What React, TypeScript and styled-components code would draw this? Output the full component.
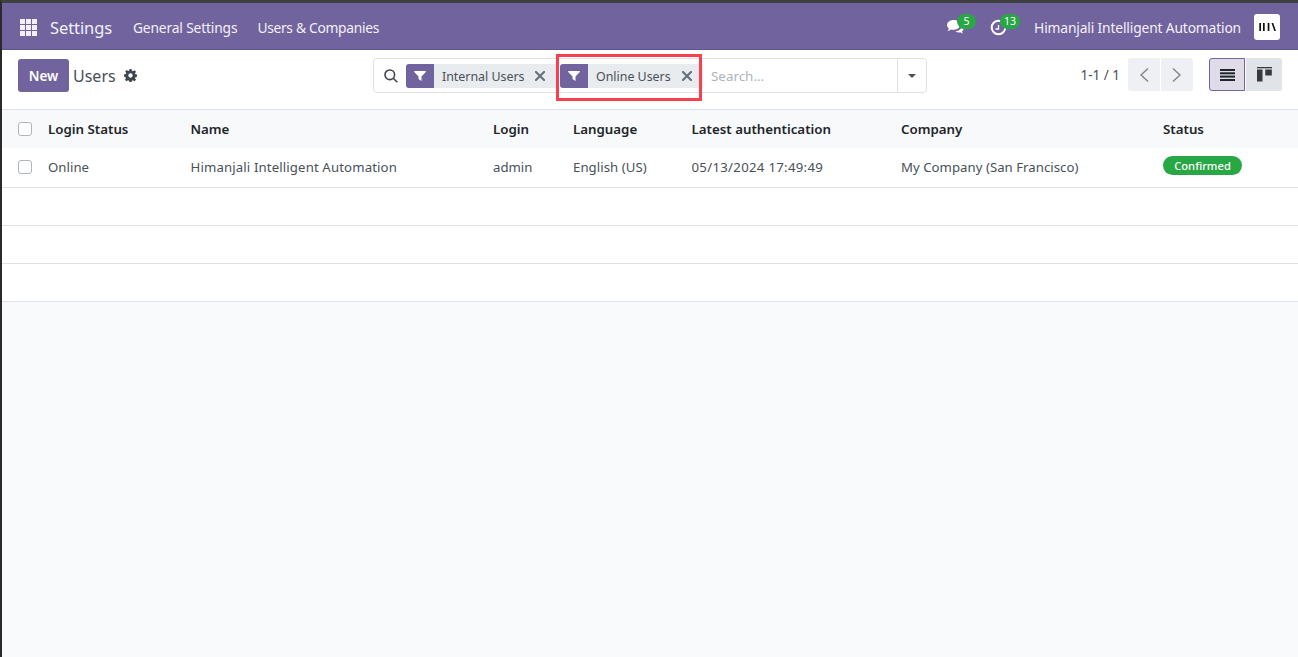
import React from "react";
import styled, { createGlobalStyle } from "styled-components";

const Global = createGlobalStyle`
  html, body { margin: 0; padding: 0; height: 100%; }
  body { font-family: "Noto Sans", "Open Sans", sans-serif; font-size: 13.5px; color: #495057; background: #f9fafb; }
  #root { height: 100%; }
  * { box-sizing: border-box; }
`;

const Page = styled.div`
  position: relative;
  height: 657px;
  overflow: hidden;
  display: flex;
  flex-direction: column;
  border-top: 3px solid #3f3f3f;
  border-left: 2px solid #2a2a2a;
  background: #f9fafb;
`;

const Navbar = styled.header`
  flex: 0 0 47px;
  display: flex;
  align-items: center;
  background: #71639e;
  border-bottom: 1px solid #5f5390;
  color: #f3f1f7;
  padding: 2px 18px 0 18px;
`;

const AppGrid = styled.svg`
  width: 17px;
  height: 17px;
  margin-right: 13px;
`;

const Brand = styled.span`
  font-size: 16.5px;
  margin-right: 21px;
  letter-spacing: -0.1px;
`;

const NavLink = styled.span<{ $ls: number }>`
  font-size: 13.8px;
  margin-right: 20px;
  letter-spacing: ${(p) => p.$ls}px;
`;

const Spacer = styled.div`
  flex: 1;
`;

const IconBadgeWrap = styled.div<{ $w: number }>`
  position: relative;
  width: ${(p) => p.$w}px;
  height: 20px;
  display: flex;
  align-items: center;
  color: #fff;
`;

const Badge = styled.span<{ $l: number; $w: number }>`
  position: absolute;
  left: ${(p) => p.$l}px;
  top: -3px;
  width: ${(p) => p.$w}px;
  height: 15px;
  border-radius: 8px;
  background: #28a745;
  color: #fff;
  font-size: 10.5px;
  line-height: 15px;
  text-align: center;
`;

const UserName = styled.span`
  font-size: 13.8px;
  letter-spacing: -0.15px;
  margin-right: 13px;
`;

const Avatar = styled.div`
  width: 26px;
  height: 26px;
  border-radius: 3px;
  background: #fff;
  display: flex;
  align-items: center;
  justify-content: center;
`;

const Control = styled.div`
  flex: 0 0 60px;
  display: grid;
  grid-template-columns: 371px 554px 1fr;
  align-items: start;
  background: #fff;
  border-bottom: 1px solid #dee2e6;
  padding-top: 8px;
`;

const Left = styled.div`
  display: flex;
  align-items: center;
  padding-left: 16px;
  height: 33px;
  margin-top: 1px;
`;

const NewButton = styled.button`
  width: 51px;
  height: 33px;
  border: 0;
  border-radius: 3px;
  background: #71639e;
  color: #fff;
  font: 600 13.5px "Noto Sans", sans-serif;
  padding: 0;
`;

const Title = styled.span`
  font-size: 16px;
  color: #495057;
  margin: 0 8px 0 4px;
`;

const SearchBox = styled.div`
  height: 35px;
  border: 1px solid #dee2e6;
  border-radius: 4px;
  background: #fff;
  display: flex;
  align-items: center;
  padding-left: 10px;
  overflow: hidden;
`;

const SearchGlyph = styled.svg`
  width: 14px;
  height: 14px;
  margin-right: 8px;
  flex: none;
`;

const Facet = styled.div<{ $w: number; $mr: number }>`
  width: ${(p) => p.$w}px;
  margin-right: ${(p) => p.$mr}px;
  height: 24px;
  background: #e9ecef;
  display: flex;
  align-items: center;
  border-radius: 3px 0 0 3px;
  flex: none;
`;

const FacetIcon = styled.div`
  width: 28px;
  height: 24px;
  background: #71639e;
  border-radius: 3px 0 0 3px;
  display: flex;
  align-items: center;
  justify-content: center;
  color: #fff;
  margin-right: 8px;
`;

const FacetLabel = styled.span`
  font-size: 12.4px;
  color: #495057;
  flex: 1;
  white-space: nowrap;
  padding-top: 2px;
`;

const FacetClose = styled.svg`
  width: 10px;
  height: 10px;
  margin-right: 11px;
  flex: none;
`;

const Placeholder = styled.span`
  font-size: 13.4px;
  color: #adb5bd;
  flex: 1;
`;

const Caret = styled.div`
  width: 29px;
  height: 33px;
  border-left: 1px solid #dee2e6;
  display: flex;
  align-items: center;
  justify-content: center;
  &::after {
    content: "";
    border-top: 4.5px solid #495057;
    border-left: 4.5px solid transparent;
    border-right: 4.5px solid transparent;
  }
`;

const Right = styled.div`
  display: flex;
  align-items: center;
  justify-content: flex-end;
  padding-right: 16px;
  height: 33px;
`;

const PagerText = styled.span`
  font-size: 13.5px;
  color: #495057;
  margin-right: 8px;
`;

const PagerButton = styled.div`
  width: 32px;
  height: 33px;
  background: #eef0f3;
  display: flex;
  align-items: center;
  justify-content: center;
  color: #7b8188;
  &:first-of-type { border-radius: 3px 0 0 3px; }
  & + & { margin-left: 1px; border-radius: 0 3px 3px 0; }
`;

const Pager = styled.div`
  display: flex;
  margin-right: 16px;
`;

const Views = styled.div`
  display: flex;
  gap: 1px;
`;

const ViewButton = styled.div<{ $active?: boolean }>`
  width: 36px;
  height: 33px;
  display: flex;
  align-items: center;
  justify-content: center;
  background: ${(p) => (p.$active ? "#dfdbe9" : "#e0e3e7")};
  border: ${(p) => (p.$active ? "1px solid #71639e" : "0")};
  border-radius: ${(p) => (p.$active ? "3px 0 0 3px" : "0 3px 3px 0")};
`;

const Row = styled.div<{ $head?: boolean; $h: number }>`
  flex: none;
  display: grid;
  grid-template-columns: 46px 142.5px 302.5px 80px 118.5px 209.5px 262px 1fr;
  align-items: center;
  height: ${(p) => p.$h}px;
  padding-bottom: ${(p) => (p.$head ? 0 : 2)}px;
  background: ${(p) => (p.$head ? "#f8f9fa" : "#fff")};
  border-bottom: ${(p) => (p.$head ? "0" : "1px solid #dee2e6")};
  font-weight: ${(p) => (p.$head ? 600 : 400)};
  color: ${(p) => (p.$head ? "#212529" : "#495057")};
  font-size: ${(p) => (p.$head ? 13.3 : 13.2)}px;
`;

const EmptyRow = styled.div`
  flex: none;
  height: 38px;
  background: #fff;
  border-bottom: 1px solid #dee2e6;
`;

const Check = styled.span`
  display: block;
  width: 14px;
  height: 14px;
  margin-left: 16px;
  border: 1px solid #adb5bd;
  border-radius: 3px;
  background: #fff;
`;

const Cell = styled.span<{ $ls?: number }>`
  white-space: nowrap;
  letter-spacing: ${(p) => p.$ls ?? 0}px;
`;

const Pill = styled.span`
  display: block;
  width: 79px;
  height: 19px;
  margin-bottom: 2px;
  border-radius: 10px;
  background: #28a745;
  color: #fff;
  font-size: 11.2px;
  font-weight: 500;
  line-height: 19px;
  text-align: center;
`;

const Highlight = styled.div`
  position: absolute;
  left: 554px;
  top: 51px;
  width: 146px;
  height: 47px;
  border: 3px solid #f8404f;
  pointer-events: none;
`;

const Filter = () => (
  <svg width="12" height="12" viewBox="0 0 12 12" fill="currentColor">
    <path d="M.6 1h10.800c.5 0 .7.5.4.9L7.500 6.400V11L4.500 9V6.400L.2 1.900C-.1 1.500.1 1 .6 1z" />
  </svg>
);

const Close = () => (
  <FacetClose viewBox="0 0 10 10">
    <path d="M1 1l8 8M9 1l-8 8" stroke="#667079" strokeWidth="2.100" strokeLinecap="square" fill="none" />
  </FacetClose>
);

const Chevron = ({ dir }: { dir: "l" | "r" }) => (
  <svg width="10" height="16" viewBox="0 0 10 16" fill="none" stroke="currentColor" strokeWidth="1.300">
    <path d={dir === "l" ? "M9 1.500L2 8l7 6.500" : "M1 1.500L8 8l-7 6.500"} />
  </svg>
);

const head = ["Login Status", "Name", "Login", "Language", "Latest authentication", "Company", "Status"];

export default function App() {
  return (
    <Page>
      <Global />
      <Navbar>
        <AppGrid viewBox="0 0 17 17" fill="#f3f1f7">
          {[0, 6, 12].flatMap((y) =>
            [0, 6, 12].map((x) => <rect key={`${x}-${y}`} x={x} y={y} width="5" height="5" />)
          )}
        </AppGrid>
        <Brand>Settings</Brand>
        <NavLink $ls={-0.16}>General Settings</NavLink>
        <NavLink $ls={-0.3}>Users &amp; Companies</NavLink>
        <Spacer />
        <IconBadgeWrap $w={44}>
          <svg width="19" height="16" viewBox="0 0 19 17" fill="#fff">
            <path d="M7.500 1C3.600 1 .5 3.400.5 6.400c0 1.500.8 2.800 2 3.800-.3 1-.9 1.800-1.700 2.500 1.500-.1 2.900-.7 4-1.500.8.2 1.700.3 2.700.3 3.900 0 7-2.400 7-5.600S11.400 1 7.500 1z" />
            <path d="M16.500 7c.2 2.900-2.800 5.800-7 6.200 1 .8 2.300 1.200 3.500 1.200.5 0 1 0 1.500-.2.8.6 1.800 1 3 1.100-.6-.6-1-1.200-1.200-1.900 1.100-.8 1.700-1.900 1.700-3 0-1.300-.6-2.500-1.500-3.400z" />
          </svg>
          <Badge $l={11} $w={19}>5</Badge>
        </IconBadgeWrap>
        <IconBadgeWrap $w={44}>
          <svg width="17" height="17" viewBox="0 0 17 17" fill="none" stroke="#fff" strokeWidth="2">
            <circle cx="8.500" cy="8.500" r="6.800" />
            <path d="M8.500 6v4H5.500" strokeWidth="1.400" />
          </svg>
          <Badge $l={10} $w={20}>13</Badge>
        </IconBadgeWrap>
        <UserName>Himanjali Intelligent Automation</UserName>
        <Avatar>
          <svg width="17" height="8" viewBox="0 0 17 8" fill="#111">
            <rect x="0.300" y="0" width="1.700" height="8" />
            <rect x="4" y="0" width="1.700" height="8" />
            <rect x="8.700" y="0" width="1.700" height="8" />
            <path d="M12.500 0h1.700L17 8h-1.700z" />
          </svg>
        </Avatar>
      </Navbar>
      <Control>
        <Left>
          <NewButton>New</NewButton>
          <Title>Users</Title>
          <svg width="13" height="13" viewBox="0 0 24 24" fill="#3f4650">
            <path fillRule="evenodd" d="M10 0h4l.6 3.300 2 .8L19.400 2.200l2.800 2.800-1.900 2.800.8 2 3.300.6v4l-3.300.6-.8 2 1.900 2.800-2.800 2.800-2.800-1.900-2 .8-.6 3.300h-4l-.6-3.300-2-.8-2.800 1.900-2.800-2.800 1.900-2.800-.8-2L0 14v-4l3.300-.6.8-2L2.200 4.600 5 1.800l2.800 1.900 2-.8zM12 8a4 4 0 100 8 4 4 0 000-8z" />
          </svg>
        </Left>
        <SearchBox>
          <SearchGlyph viewBox="0 0 14 14" fill="none" stroke="#3f4650" strokeWidth="1.600">
            <circle cx="5.800" cy="5.800" r="4.800" />
            <path d="M9.300 9.300L13.300 13.300" />
          </SearchGlyph>
          <Facet $w={150} $mr={4}>
            <FacetIcon><Filter /></FacetIcon>
            <FacetLabel>Internal Users</FacetLabel>
            <Close />
          </Facet>
          <Facet $w={143} $mr={8}>
            <FacetIcon><Filter /></FacetIcon>
            <FacetLabel>Online Users</FacetLabel>
            <Close />
          </Facet>
          <Placeholder>Search...</Placeholder>
          <Caret />
        </SearchBox>
        <Right>
          <PagerText>1-1 / 1</PagerText>
          <Pager>
            <PagerButton><Chevron dir="l" /></PagerButton>
            <PagerButton><Chevron dir="r" /></PagerButton>
          </Pager>
          <Views>
            <ViewButton $active>
              <svg width="15" height="12" viewBox="0 0 15 12" fill="#212529">
                <rect y="0" width="15" height="2" />
                <rect y="3.300" width="15" height="2" />
                <rect y="6.600" width="15" height="2" />
                <rect y="10" width="15" height="2" />
              </svg>
            </ViewButton>
            <ViewButton>
              <svg width="15" height="15" viewBox="0 0 15 15" fill="#343a40">
                <rect x="0" y="0" width="15" height="1.300" />
                <rect x="0" y="2.500" width="5.500" height="12" />
                <rect x="8.300" y="2.500" width="6.500" height="6" />
              </svg>
            </ViewButton>
          </Views>
        </Right>
      </Control>
      <Row $head $h={38}>
        <Check />
        {head.map((h) => <Cell key={h}>{h}</Cell>)}
      </Row>
      <Row $h={40}>
        <Check />
        <Cell $ls={0.04}>Online</Cell>
        <Cell $ls={0.13}>Himanjali Intelligent Automation</Cell>
        <Cell>admin</Cell>
        <Cell $ls={0.06}>English (US)</Cell>
        <Cell $ls={0.3}>05/13/2024 17:49:49</Cell>
        <Cell $ls={0.03}>My Company (San Francisco)</Cell>
        <Cell><Pill>Confirmed</Pill></Cell>
      </Row>
      <EmptyRow />
      <EmptyRow />
      <EmptyRow />
      <Highlight />
    </Page>
  );
}
